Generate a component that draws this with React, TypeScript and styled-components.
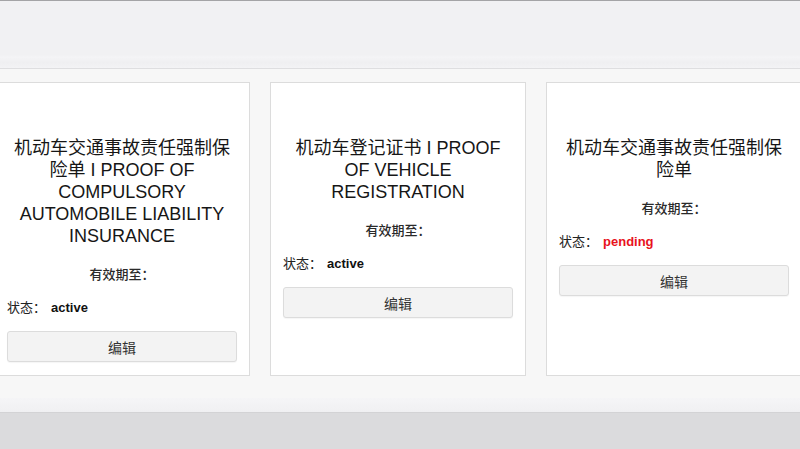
import React from 'react';
import styled, { createGlobalStyle } from 'styled-components';

const GlobalStyle = createGlobalStyle`
  html, body {
    margin: 0;
    padding: 0;
    background: #f7f7f7;
  }
  body {
    font-family: "Liberation Sans", "Noto Sans CJK SC", sans-serif;
  }
`;

const Page = styled.div`
  display: flex;
  flex-direction: column;
  height: 449px;
  overflow: hidden;
`;

const TopBar = styled.div`
  height: 67px;
  flex-shrink: 0;
  border-top: 1px solid #a4a4a6;
  border-bottom: 1px solid #dedee0;
  background: linear-gradient(#f1f1f3 0, #f1f1f3 80%, #f4f4f6 84%, #efeff1 92%, #f3f3f5 100%);
`;

const Main = styled.div`
  display: flex;
  justify-content: center;
  align-items: stretch;
  gap: 20px;
  padding: 13px 4px 22px 0;
  background: #f7f7f7;
  overflow: hidden;
`;

const Card = styled.div`
  flex: 0 0 256px;
  box-sizing: border-box;
  background: #fff;
  border: 1px solid #dcdcdc;
  padding: 54px 12px 13px;
  display: flex;
  flex-direction: column;
`;

const Title = styled.h3`
  margin: 0;
  font-size: 18px;
  line-height: 22px;
  font-weight: 400;
  color: #161616;
  text-align: center;
`;

const Validity = styled.div`
  margin-top: 20px;
  font-size: 13px;
  line-height: 16px;
  font-weight: 500;
  color: #2a2a2a;
  text-align: center;
`;

const StatusRow = styled.div`
  margin-top: 17px;
  font-size: 13px;
  line-height: 16px;
  color: #222;
`;

const StatusValue = styled.span<{ $tone: string }>`
  font-weight: 700;
  color: ${({ $tone }) => $tone};
  margin-left: 5px;
`;

const EditButton = styled.button`
  margin-top: 15px;
  width: 100%;
  height: 31px;
  background: #f3f3f3;
  border: 1px solid #dcdcdc;
  border-radius: 3px;
  box-shadow: 0 1px 1px rgba(0, 0, 0, 0.04);
  font-family: inherit;
  font-size: 14px;
  color: #333;
  cursor: pointer;
`;

const BottomBar = styled.div`
  height: 14px;
  flex-shrink: 0;
  background: linear-gradient(#f5f5f7, #f0f0f2);
`;

const Dock = styled.div`
  flex: 1;
  background: #dbdbdd;
  border-top: 1px solid #d3d3d5;
`;

const docs = [
  {
    title: '机动车交通事故责任强制保险单 I PROOF OF COMPULSORY AUTOMOBILE LIABILITY INSURANCE',
    status: 'active',
  },
  {
    title: '机动车登记证书 I PROOF OF VEHICLE REGISTRATION',
    status: 'active',
  },
  {
    title: '机动车交通事故责任强制保险单',
    status: 'pending',
  },
];

const statusColor = (status: string) => (status === 'pending' ? '#e8121c' : '#111');

export default function App() {
  return (
    <Page>
      <GlobalStyle />
      <TopBar />
      <Main>
        {docs.map((doc, i) => (
          <Card key={i}>
            <Title>{doc.title}</Title>
            <Validity>有效期至：</Validity>
            <StatusRow>
              状态：<StatusValue $tone={statusColor(doc.status)}>{doc.status}</StatusValue>
            </StatusRow>
            <EditButton>编辑</EditButton>
          </Card>
        ))}
      </Main>
      <BottomBar />
      <Dock />
    </Page>
  );
}
